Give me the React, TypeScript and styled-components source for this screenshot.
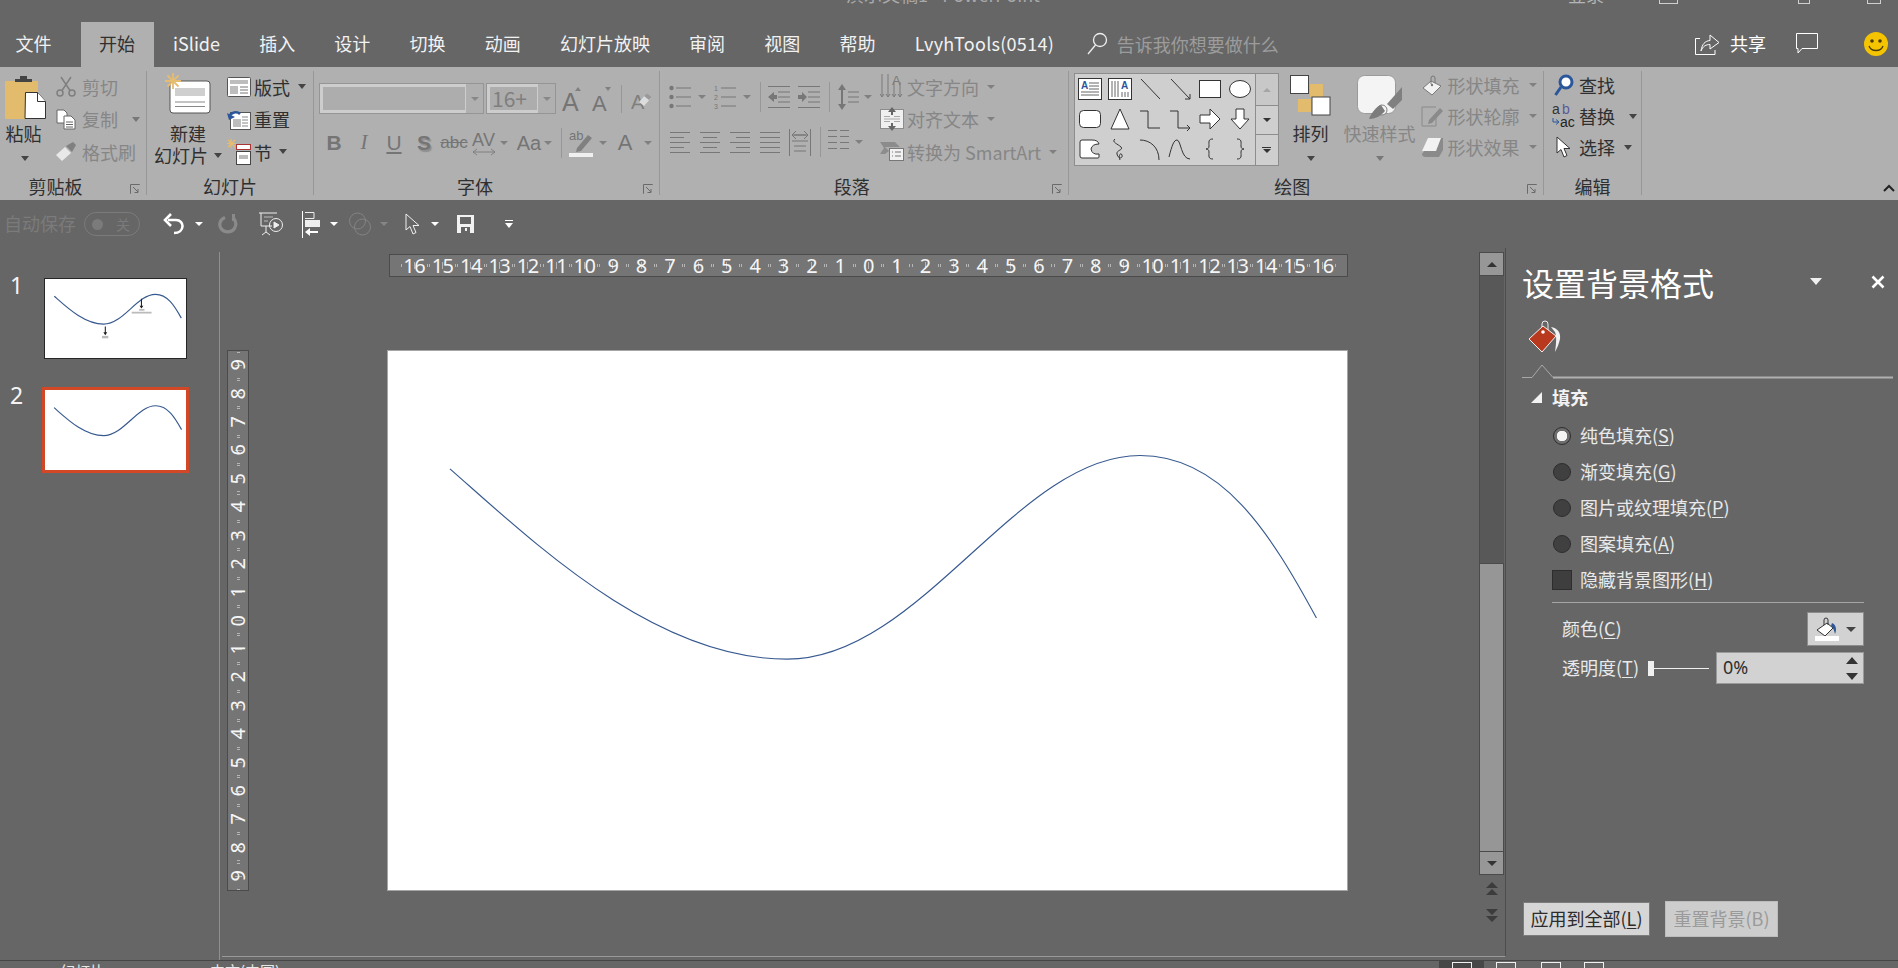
import React from "react";
import styled, { createGlobalStyle } from "styled-components";

const DARK = "#333333";
const OFF = "#868686";

const Global = createGlobalStyle`
  html, body { margin: 0; padding: 0; background: #666666; }
  body { font-family: "Noto Sans CJK SC", "Noto Sans", sans-serif; }
  #root { width: 1898px; height: 968px; overflow: hidden; }
  * { box-sizing: border-box; }
  svg { display: block; flex: none; }
`;

const Root = styled.div`
  width: 1898px; height: 968px; overflow: hidden; display: flex; flex-direction: column; background: #666666;
`;
/* ---- title bar ---- */
const TitleBar = styled.header`
  height: 22px; flex: none; overflow: hidden; display: flex; color: #a9a9a9; font-size: 18px; line-height: 24px;
`;
const TitleText = styled.div`
  margin: -18px 0 0 846px; width: 722px; white-space: pre;
`;
const TitleLogin = styled.div`
  margin-top: -18px; width: 91px; color: #b5b5b5;
`;
const WinBtn = styled.div<{ $w: number; $ml?: number }>`
  width: ${(p) => p.$w}px; height: 4px; margin-left: ${(p) => p.$ml || 0}px; border: 1px solid #d0d0d0; border-top: 0;
`;
/* ---- tabs ---- */
const TabRow = styled.nav`
  height: 45px; flex: none; display: flex; align-items: stretch; color: #f2f2f2; font-size: 18px;
`;
const Tab = styled.div<{ $active?: boolean; $first?: boolean; $latin?: boolean }>`
  display: flex; align-items: center; white-space: nowrap; height: 45px;
  padding: ${(p) => (p.$first ? "0 29px 4px 15.5px" : p.$active ? "0 18.5px 4px" : "0 19.6px 4px")};
  ${(p) => p.$active && "background:#b0b0b0;color:#303030;"}
  ${(p) => p.$latin && "letter-spacing:0.28px;"}
`;
const Search = styled.div`
  display: flex; align-items: center; gap: 9px; margin-left: 13px; color: #9c9c9c; font-size: 18px; padding-bottom: 2px;
`;
const TabRight = styled.div`
  margin-left: auto; display: flex; align-items: center; padding: 0 10px 2px 0; color: #fff;
`;
const Share = styled.span`
  margin: 0 30px 2px 10px; font-size: 18px;
`;
const SmileWrap = styled.div`
  margin-left: 46px; flex: none;
`;
/* ---- ribbon ---- */
const Ribbon = styled.div`
  height: 133px; flex: none; background: #b0b0b0; padding-top: 4px; display: flex; position: relative;
`;
const Group = styled.section<{ $w: number }>`
  width: ${(p) => p.$w}px; height: 124px; flex: none; display: flex; flex-direction: column; border-right: 1px solid #979797;
`;
const Body = styled.div<{ $pl?: number }>`
  flex: 1; display: flex; padding-left: ${(p) => p.$pl || 0}px; min-height: 0; color: ${DARK}; font-size: 18px;
`;
const GroupLabel = styled.div<{ $pr?: number }>`
  position: relative; height: 22px; margin: -4px 0 -2px; line-height: 22px; text-align: center; font-size: 18px; color: #2f2f2f; padding-right: ${(p) => p.$pr || 0}px;
`;
const Launcher = styled.div`
  position: absolute; right: 6px; bottom: 3px;
`;
const BigCol = styled.div<{ $w: number; $ml?: number; $off?: boolean; $pt?: number }>`
  width: ${(p) => p.$w}px; margin-left: ${(p) => p.$ml || 0}px; flex: none; display: flex; flex-direction: column; align-items: center;
  padding-top: ${(p) => p.$pt ?? 2}px; color: ${(p) => (p.$off ? OFF : "#2f2f2f")}; white-space: nowrap;
`;
const BigIcon = styled.div<{ $h: number }>`
  height: ${(p) => p.$h}px; flex: none;
`;
const BigLine = styled.div<{ $mr?: number }>`
  height: 22px; margin-right: ${(p) => p.$mr || 0}px; line-height: 22px; display: flex; align-items: center; gap: 6px;
`;
const BigCaret = styled.div<{ $mr?: number }>`
  height: 24px; margin: 2px ${(p) => p.$mr || 0}px 0 0; display: flex; align-items: center;
`;
const SmallCol = styled.div<{ $ml?: number; $rh: number; $pt?: number }>`
  margin-left: ${(p) => p.$ml || 0}px; padding-top: ${(p) => p.$pt || 0}px; flex: none; display: grid; grid-auto-rows: ${(p) => p.$rh}px;
  align-content: start;
`;
const SmallBtn = styled.div<{ $off?: boolean; $gap?: number }>`
  display: flex; align-items: center; gap: ${(p) => p.$gap ?? 4}px; padding-bottom: 3px; line-height: 24px; color: ${(p) => (p.$off ? OFF : "#2f2f2f")}; white-space: nowrap;
`;
const IconWrap = styled.div<{ $w: number }>`
  width: ${(p) => p.$w}px; flex: none; display: flex; justify-content: center; align-items: center;
`;
const Caret = styled.i<{ $c?: string; $ml?: number; $up?: boolean; $s?: number }>`
  display: block; flex: none; width: 0; height: 0; margin-left: ${(p) => p.$ml || 0}px;
  border-left: ${(p) => p.$s || 4.5}px solid transparent; border-right: ${(p) => p.$s || 4.5}px solid transparent;
  ${(p) => (p.$up ? "border-bottom" : "border-top")}: ${(p) => (p.$s || 4.5) + 0.5}px solid ${(p) => p.$c || "#444"};
`;
const Stack = styled.div<{ $pt?: number }>`
  display: flex; flex-direction: column; padding-top: ${(p) => p.$pt || 0}px; flex: none;
`;
const ToolRow = styled.div<{ $h: number; $mt?: number }>`
  height: ${(p) => p.$h}px; margin-top: ${(p) => p.$mt || 0}px; display: flex; align-items: center; flex: none;
`;
const Slot = styled.div<{ $w: number; $ml?: number; $c?: string; $fs?: number; $font?: string; $b?: boolean; $i?: boolean }>`
  width: ${(p) => p.$w}px; margin-left: ${(p) => p.$ml || 0}px; flex: none; display: flex; align-items: center; justify-content: center;
  color: ${(p) => p.$c || "#757575"}; font-size: ${(p) => p.$fs || 18}px; font-family: ${(p) => p.$font || "inherit"};
  font-weight: ${(p) => (p.$b ? 700 : 400)}; font-style: ${(p) => (p.$i ? "italic" : "normal")}; line-height: 1.2; white-space: nowrap;
`;
const VSep = styled.div<{ $ml: number; $h: number }>`
  width: 1px; height: ${(p) => p.$h}px; margin-left: ${(p) => p.$ml}px; background: #979797; flex: none;
`;
const Combo = styled.div<{ $w: number; $ml?: number }>`
  width: ${(p) => p.$w}px; height: 31px; margin-left: ${(p) => p.$ml || 0}px; flex: none; border: 1px solid #959595; display: flex; align-items: center; background: #b0b0b0;
`;
const ComboField = styled.div`
  flex: 1; height: 100%; border: 3px solid #cdcdcd; border-width: 3px 1px 3px 3px; background: #adadad; color: #7f7f7f; font-size: 21px; line-height: 23px; padding-left: 2px;
`;
const ComboDrop = styled.div`
  width: 17px; display: flex; justify-content: center;
`;
const Under = styled.span`
  text-decoration: underline; text-underline-offset: 2px;
`;
const Struck = styled.span`
  text-decoration: line-through;
`;
const ShadowS = styled.span`
  text-shadow: 1.5px 1.5px 1px #8f8f8f;
`;
/* ---- gallery ---- */
const Gallery = styled.div`
  margin-top: 2px; height: 93px; flex: none; display: flex; border: 1px solid #8d8d8d; background: #cfcfcf;
`;
const GalleryGrid = styled.div`
  width: 180px; display: grid; grid-template-columns: repeat(6, 30px); grid-auto-rows: 30px; align-items: center; justify-items: center;
`;
const GalleryScroll = styled.div`
  width: 23px; display: flex; flex-direction: column; border-left: 1px solid #8d8d8d;
`;
const ScrollCell = styled.div<{ $h: number; $bg: string }>`
  height: ${(p) => p.$h}px; background: ${(p) => p.$bg}; display: flex; flex-direction: column; gap: 1px; align-items: center; justify-content: center; border-bottom: 1px solid #8d8d8d;
  &:last-child { border-bottom: 0; }
`;
const Bar = styled.div`
  width: 9px; height: 1px; background: #333;
`;
const Collapse = styled.div`
  position: absolute; right: 0; bottom: 8px;
`;
/* ---- quick access ---- */
const Qat = styled.div`
  height: 48px; flex: none; display: flex; align-items: center; padding-left: 4px; color: #7b7b7b; font-size: 18px;
`;
const QatLabel = styled.span`
  padding-bottom: 2px;
`;
const Toggle = styled.div`
  width: 56px; height: 24px; margin-left: 8px; border: 1px solid #7b7b7b; border-radius: 12px; display: flex; align-items: center; justify-content: space-between; padding: 0 9px 0 7px; font-size: 14px;
`;
const Dot = styled.i`
  width: 11px; height: 11px; border-radius: 50%; background: #7b7b7b; display: block;
`;
/* ---- workspace ---- */
const Workspace = styled.main`
  flex: 1; min-height: 0; display: flex;
`;
const LeftPanel = styled.aside`
  width: 220px; height: 709px; flex: none; margin-top: 4px; border-right: 1px solid #8f8f8f; padding: 26px 0 0 10px; color: #f4f4f4;
  font-family: "Noto Sans", sans-serif; font-size: 23px;
`;
const ThumbRow = styled.div<{ $mt?: number }>`
  display: flex; margin-top: ${(p) => p.$mt || 0}px;
`;
const ThumbNo = styled.div<{ $w: number; $pt: number }>`
  width: ${(p) => p.$w}px; height: 32px; line-height: 30px; margin-top: ${(p) => p.$pt}px; flex: none;
`;
const Thumb = styled.div<{ $sel?: boolean }>`
  background: #fff; width: ${(p) => (p.$sel ? 147 : 143)}px; height: ${(p) => (p.$sel ? 86 : 81)}px;
  border: ${(p) => (p.$sel ? "3px solid #d24726" : "1px solid #262626")};
`;
const Center = styled.div`
  margin-left: 2px; width: 1284px; height: 709px; flex: none; display: flex; border-bottom: 1px solid #9a9a9a; border-right: 1px solid #4d4d4d;
`;
const Editor = styled.div`
  width: 1257px; flex: none; padding: 6px 0 0 5px;
`;
const HRuler = styled.div`
  margin-left: 162px; width: 959px; height: 23px; background: #757575; border: 1px solid #4b4b4b; display: flex; padding: 0 10px;
`;
const RCell = styled.div<{ $v?: boolean }>`
  flex: none; display: flex; align-items: center; justify-content: center; color: #f6f6f6; font-family: "Noto Sans", sans-serif; font-size: 20px; line-height: 1;
  background-repeat: no-repeat;
  background-image: linear-gradient(#b5b5b5, #b5b5b5), linear-gradient(#b5b5b5, #b5b5b5), linear-gradient(#b5b5b5, #b5b5b5);
  ${(p) =>
    p.$v
      ? `width:20px;height:28.4px;background-size:3px 1px,7px 1px,3px 1px;background-position:center 2%,center 50%,center 98%;`
      : `width:28.4px;height:21px;background-size:1px 3px,1px 7px,1px 3px;background-position:2% center,50% center,98% center;`}
`;
const RNum = styled.span<{ $v?: boolean }>`
  ${(p) => (p.$v ? "transform: rotate(-90deg);" : "")} display: block; letter-spacing: -0.5px;
`;
const SlideRow = styled.div`
  display: flex; margin-top: 73px;
`;
const VRuler = styled.div`
  width: 22px; height: 541px; flex: none; background: #757575; border: 1px solid #4b4b4b; overflow: hidden; display: flex; flex-direction: column;
`;
const Slide = styled.div`
  width: 961px; height: 541px; margin-left: 138px; flex: none; background: #fff; border: 1px solid #a5a5a5;
`;
const VScroll = styled.div`
  width: 25px; flex: none; margin-top: 4px; display: flex; flex-direction: column; align-items: center;
`;
const ScrollBtn = styled.div<{ $h: number }>`
  width: 25px; height: ${(p) => p.$h}px; flex: none; background: #979797; border: 1px solid #4a4a4a; display: flex; align-items: center; justify-content: center;
`;
const Track = styled.div`
  width: 25px; height: 287px; flex: none; background: #585858; border-left: 1px solid #4a4a4a;
`;
const Thumbbar = styled.div`
  width: 25px; height: 288px; flex: none; background: #969696; border: 1px solid #4a4a4a; border-width: 1px 1px 0 1px;
`;
const Nav = styled.div<{ $mt: number }>`
  margin-top: ${(p) => p.$mt}px;
`;
/* ---- pane ---- */
const Pane = styled.aside`
  flex: 1; height: 712px; display: flex; flex-direction: column; padding: 14px 5px 0 16px; color: #e9e9e9; font-size: 18px;
`;
const PaneHead = styled.div`
  display: flex; align-items: center; height: 40px; flex: none; font-size: 32px; color: #fff; line-height: 38px; white-space: nowrap; padding-bottom: 1px;
`;
const PaneCaret = styled.div`
  margin-left: auto;
`;
const PaneClose = styled.div`
  margin: 0 8px 0 49px;
`;
const BucketTab = styled.div`
  margin: 18px 0 0 6px; height: 33px; flex: none;
`;
const TabLine = styled.div`
  margin-top: 11px; height: 15px; flex: none;
`;
const SectionHead = styled.div`
  margin: 6px 0 0 9px; height: 27px; line-height: 24px; padding-bottom: 3px; display: flex; align-items: center; gap: 10px; font-weight: 700; color: #f2f2f2; flex: none;
`;
const Options = styled.div`
  margin: 6px 0 0 31px; display: grid; grid-auto-rows: 36px; flex: none;
`;
const Option = styled.div`
  display: flex; align-items: center; gap: 9px; white-space: nowrap;
`;
const OptionText = styled.span`
  padding-bottom: 3px;
`;
const Radio = styled.i<{ $on?: boolean }>`
  width: 18px; height: 18px; border-radius: 50%; border: 1px solid #2d2d2d; display: block; flex: none;
  background: ${(p) => (p.$on ? "radial-gradient(circle, #f4f4f4 0 5px, #6e6e6e 5.5px)" : "#404040")};
`;
const Check = styled.i`
  width: 20px; height: 20px; margin-left: -1px; margin-right: -1px; display: block; flex: none; background: #3e3e3e; border: 1px solid #2d2d2d;
`;
const PaneRule = styled.div`
  margin: 4px 0 0 30px; width: 312px; height: 1px; background: #a5a5a5; flex: none;
`;
const FieldRow = styled.div<{ $mt: number; $h: number }>`
  margin: ${(p) => p.$mt}px 0 0 40px; width: 302px; height: ${(p) => p.$h}px; display: flex; align-items: center; justify-content: space-between; flex: none; white-space: nowrap;
`;
const ColorBtn = styled.div`
  width: 57px; height: 34px; background: #d2d2d2; border: 1px solid #8c8c8c; display: flex; align-items: center; justify-content: center; gap: 7px;
`;
const FieldLabel = styled.div<{ $w?: number }>`
  ${(p) => (p.$w ? `width:${p.$w}px;flex:none;` : "")} padding-bottom: 3px;
`;
const Slider = styled.div`
  width: 61px; flex: none; height: 20px; display: flex; align-items: center; margin-right: 7px;
`;
const SliderKnob = styled.i`
  width: 6px; height: 15px; background: #f0f0f0; display: block; flex: none;
`;
const SliderLine = styled.i`
  flex: 1; height: 1px; background: #f0f0f0; display: block;
`;
const Spin = styled.div`
  flex: 1; height: 32px; background: #d2d2d2; border: 1px solid #9a9a9a; display: flex; align-items: center; justify-content: space-between; padding: 0 5px 0 6px; color: #2f2f2f; font-family: "Noto Sans", sans-serif; font-size: 18px;
`;
const SpinValue = styled.span`
  padding-bottom: 2px;
`;
const SpinArrows = styled.div`
  display: flex; flex-direction: column; gap: 9px;
`;
const PaneFooter = styled.div`
  margin-top: auto; padding: 0 0 23px 1px; display: flex; align-items: center; gap: 15px;
`;
const PaneBtn = styled.div<{ $off?: boolean }>`
  height: ${(p) => (p.$off ? 36 : 34)}px; width: ${(p) => (p.$off ? 113 : 127)}px; background: ${(p) => (p.$off ? "#cdcdcd" : "#d6d6d6")};
  border: 1px solid ${(p) => (p.$off ? "#bdbdbd" : "#7c7c7c")}; color: ${(p) => (p.$off ? "#9a9a9a" : "#2c2c2c")};
  display: flex; align-items: center; justify-content: center; white-space: nowrap; font-size: 18px; line-height: 28px; padding-bottom: 2px;
`;
/* ---- status ---- */
const Status = styled.footer`
  height: 8px; flex: none; border-top: 1px solid #464646; overflow: hidden; display: flex; color: #e8e8e8; font-size: 15px; line-height: 20px;
`;
const StatusText = styled.div<{ $w: number; $ml: number }>`
  margin: 0 0 0 ${(p) => p.$ml}px; width: ${(p) => p.$w}px; white-space: nowrap; flex: none;
`;
const StatusActive = styled.div`
  width: 45px; height: 8px; background: #474747; display: flex; justify-content: center; flex: none; margin-left: 1px;
`;
const StatusIcon = styled.i<{ $ml?: number }>`
  width: 20px; height: 6px; margin: 1px 0 0 ${(p) => p.$ml || 0}px; border: 1px solid #f0f0f0; border-bottom: 0; display: block; flex: none;
`;

/* ==== icons ==== */
const CurvePath = () => (
  <path d="M371 386.500C440 447 540 544 650 544C760 544 840 375.500 942 375.500C1010 375.500 1050 440 1088 510" fill="none" stroke="#37598f" strokeWidth="1.150" vectorEffect="non-scaling-stroke" />
);
const Launch = () => (
  <svg width="10" height="10" viewBox="0 0 10 10" fill="none" stroke="#6a6a6a">
    <path d="M9.5 1V.5H.5V9.5H1" />
    <path d="M3 3L8 8M8 5V8.5H4.5" />
  </svg>
);
const PasteIcon = () => (
  <svg width="42" height="44" viewBox="0 0 42 44">
    <rect x="0" y="6" width="33" height="38" rx="1" fill="#e2bb6c" />
    <path d="M10 7V4h5V1h7v3h5v3z" fill="#444" />
    <path d="M20.5 17.5h12l8 9v17h-20.5z" fill="#fff" stroke="#333" />
    <path d="M32.5 17.5v9h8" fill="#fff" stroke="#333" />
  </svg>
);
const Scissors = () => (
  <svg width="20" height="21" viewBox="0 0 20 21" fill="none" stroke="#7f7f7f" strokeWidth="1.5">
    <circle cx="4" cy="17" r="3" />
    <circle cx="16" cy="17" r="3" />
    <path d="M6 14.5L15 1M14 14.5L5 1" />
  </svg>
);
const CopyIcon = () => (
  <svg width="20" height="21" viewBox="0 0 20 21" fill="#fff" stroke="#666">
    <path d="M1 1h7l3 3v10H1z" />
    <path d="M8 7h7l4 4v9H8z" />
    <path d="M10 13h7M10 15.500h7M10 18h7" />
  </svg>
);
const BrushIcon = () => (
  <svg width="22" height="21" viewBox="0 0 22 21">
    <path d="M1 14L10 6l6 6-9 8z" fill="#e8e8e8" />
    <path d="M11 5l7-4 3 3-4 7z" fill="#808080" />
  </svg>
);
const NewSlideIcon = () => (
  <svg width="46" height="41" viewBox="0 0 46 41">
    <rect x="5" y="8" width="40" height="32" rx="3" fill="#fff" stroke="#555" />
    <rect x="10" y="15" width="30" height="8" fill="#cfcfcf" />
    <path d="M10 29h30M10 33.500h30" stroke="#888" />
    <path d="M8 0v16M0 8h16M2.500 2.500l11 11M13.500 2.500l-11 11" stroke="#e6bc70" strokeWidth="1.8" />
  </svg>
);
const LayoutIcon = () => (
  <svg width="24" height="20" viewBox="0 0 24 20">
    <rect x=".5" y=".5" width="23" height="19" rx="1" fill="#fff" stroke="#555" />
    <rect x="3" y="3" width="18" height="4" fill="#bdbdbd" />
    <rect x="3" y="9" width="8" height="8" fill="#bdbdbd" />
    <path d="M13 10h8M13 13h8M13 16h8" stroke="#777" />
  </svg>
);
const ResetIcon = () => (
  <svg width="24" height="21" viewBox="0 0 24 21">
    <rect x="3.500" y="3.500" width="20" height="17" fill="#fff" stroke="#555" />
    <rect x="6" y="10" width="8" height="8" fill="#bdbdbd" />
    <path d="M15 8h6M15 11h6M15 14h6M15 17h6" stroke="#888" />
    <path d="M2 8C4 3 10 2 13 5" fill="none" stroke="#2b579a" strokeWidth="2.500" />
    <path d="M0 4l2 7 6-3z" fill="#2b579a" />
  </svg>
);
const SectionIcon = () => (
  <svg width="24" height="26" viewBox="0 0 24 26">
    <path d="M4 0v9M0 4.500h9M1 1l7 7M8 1l-7 7" stroke="#e6bc70" strokeWidth="1.200" />
    <rect x="9.500" y="5.500" width="14" height="5" fill="#fff" stroke="#a33" />
    <rect x="9.500" y="12.500" width="14" height="13" fill="#fff" stroke="#444" />
    <rect x="12" y="16" width="9" height="4" fill="#bbb" />
  </svg>
);
const AGrow = ({ up }: { up: boolean }) => (
  <svg width="20" height="26" viewBox="0 0 20 26">
    <text x="0" y="25" fontFamily="Liberation Sans" fontSize={up ? 25 : 22} fill="#757575">A</text>
    <path d={up ? "M13 5l3-4 3 4z" : "M13 1l3 4 3-4z"} fill="#808080" />
  </svg>
);
const ClearIcon = () => (
  <svg width="22" height="30" viewBox="0 0 22 30">
    <text x="0" y="25" fontFamily="Liberation Sans" fontSize="20" fill="#7f7f7f">A</text>
    <path d="M8 18l8-9 5 4-8 9z" fill="#dcdcdc" />
    <path d="M13 12l3-3 5 4-3 3z" fill="#9a9a9a" />
  </svg>
);
const AVIcon = () => (
  <svg width="24" height="26" viewBox="0 0 24 26">
    <text x="0" y="16" fontFamily="Liberation Sans" fontSize="18" fill="#757575" textLength="23">AV</text>
    <path d="M1 22h22M5 19l-4 3 4 3M19 19l4 3-4 3" stroke="#808080" fill="none" />
  </svg>
);
const HighlightIcon = () => (
  <svg width="25" height="30" viewBox="0 0 25 30">
    <text x="0" y="12" fontFamily="Liberation Sans" fontSize="13" fill="#757575">ab</text>
    <path d="M8 20L19 7l4 3L12 23l-5 1z" fill="#808080" />
    <rect x="0" y="25" width="24" height="4" fill="#f0f0f0" />
  </svg>
);
const lines = (arr: [number, number, number][]) => arr.map(([a, b, y]) => `M${a} ${y}H${b}`).join("");
const BulletIcon = () => (
  <svg width="22" height="26" viewBox="0 0 22 26">
    <circle cx="2.500" cy="4" r="2.200" fill="#777" /><circle cx="2.500" cy="13" r="2.200" fill="#777" /><circle cx="2.500" cy="22" r="2.200" fill="#777" />
    <path d={lines([[7, 22, 4], [7, 22, 13], [7, 22, 22]])} stroke="#777" />
  </svg>
);
const NumberIcon = () => (
  <svg width="22" height="26" viewBox="0 0 22 26">
    <text x="0" y="7" fontSize="7" fill="#777" fontFamily="Liberation Sans">1</text>
    <text x="0" y="16" fontSize="7" fill="#777" fontFamily="Liberation Sans">2</text>
    <text x="0" y="25" fontSize="7" fill="#777" fontFamily="Liberation Sans">3</text>
    <path d={lines([[7, 22, 4], [7, 22, 13], [7, 22, 22]])} stroke="#777" />
  </svg>
);
const IndentIcon = ({ out }: { out: boolean }) => (
  <svg width="22" height="24" viewBox="0 0 22 24">
    <path d="M0 1.500H22M0 22.500H22M10 7H22M10 12H22M10 17H22" stroke="#777" />
    <path d={out ? "M0 12l6-5v3h3v4H6v3z" : "M9 12l-5-5v3H0v4h4v3z"} fill="#777" />
  </svg>
);
const SpacingIcon = () => (
  <svg width="22" height="26" viewBox="0 0 22 26">
    <path d="M5 0l4 6H6v14h3l-4 6-4-6h3V6H1z" fill="#777" />
    <path d="M11 8H22M11 13H22M11 18H22" stroke="#777" />
  </svg>
);
const AlignIcon = ({ k }: { k: "l" | "c" | "r" | "j" }) => {
  const d: Record<string, [number, number][]> = {
    l: [[0, 20], [0, 14], [0, 20], [0, 14], [0, 20]],
    c: [[0, 20], [3, 17], [0, 20], [3, 17], [0, 20]],
    r: [[0, 20], [6, 20], [0, 20], [6, 20], [0, 20]],
    j: [[0, 20], [0, 20], [0, 20], [0, 20], [0, 20]],
  };
  return (
    <svg width="20" height="25" viewBox="0 0 20 25">
      <path d={d[k].map(([a, b], i) => `M${a} ${2.5 + i * 5}H${b}`).join("")} stroke="#777" strokeWidth="1" />
    </svg>
  );
};
const DistIcon = () => (
  <svg width="22" height="27" viewBox="0 0 22 27">
    <path d="M.5 0V27M21.500 0V27M3 12h16M5 6h12M5 17h12M5 22h12" stroke="#777" />
    <path d="M3 6l4-4M3 6l4 4M19 6l-4-4M19 6l-4 4M3 6h16" stroke="#777" fill="none" />
  </svg>
);
const ColsIcon = () => (
  <svg width="21" height="26" viewBox="0 0 21 26">
    <path d="M0 1.500H9M0 7.500H9M0 13.500H9M0 19.500H9M12 1.500H21M12 7.500H21M12 13.500H21M12 19.500H21" stroke="#777" />
  </svg>
);
const TextDirIcon = () => (
  <svg width="24" height="25" viewBox="0 0 24 25">
    <path d="M2 0V22M8 0V22M14 8V22M20 8V22" stroke="#7a7a7a" />
    <path d="M0 20l2 3 2-3M6 20l2 3 2-3M12 20l2 3 2-3M18 20l2 3 2-3" stroke="#7a7a7a" fill="none" />
    <text x="12" y="11" fontFamily="Liberation Sans" fontSize="13" fill="#7a7a7a">A</text>
  </svg>
);
const VAlignIcon = () => (
  <svg width="24" height="24" viewBox="0 0 24 24">
    <rect x="0.500" y="2.500" width="23" height="19" fill="#f0f0f0" stroke="#8c8c8c" />
    <path d="M4 12H20M4 9.500H10M14 9.500H20M4 14.500H10M14 14.500H20" stroke="#aaa" />
    <path d="M12 0l4 5h-3v3h-2V5H8zM12 24l4-5h-3v-3h-2v3H8z" fill="#666" />
  </svg>
);
const SmartArtIcon = () => (
  <svg width="24" height="19" viewBox="0 0 24 19">
    <path d="M0 0h15l5 5H5l4 4-4 3H0l4-6z" fill="#8c8c8c" />
    <rect x="9.500" y="6.500" width="14" height="12" fill="#f2f2f2" stroke="#777" />
    <path d="M12 10h1M15 10h6M12 14h1M15 14h6" stroke="#777" />
  </svg>
);
const S = { stroke: "#333", fill: "none", strokeWidth: 1 };
const F = { stroke: "#333", fill: "#fff", strokeWidth: 1 };
const Shp = ({ children }: { children: React.ReactNode }) => (
  <svg width="24" height="24" viewBox="0 0 24 24">{children}</svg>
);
const shapes: React.ReactNode[] = [
  <Shp key="a"><rect x=".5" y="1.500" width="23" height="21" {...F} /><text x="3" y="12" fontSize="10" fontWeight="700" fill="#2b579a" fontFamily="Liberation Sans">A</text><path d="M11 6h10M11 9h10M11 12h10M3 15h18M3 18h18" stroke="#666" /></Shp>,
  <Shp key="b"><rect x=".5" y="1.500" width="23" height="21" {...F} /><text x="13" y="12" fontSize="10" fontWeight="700" fill="#2b579a" fontFamily="Liberation Sans">A</text><path d="M4 4v16M7 4v16M10 4v16M14 15v5M17 15v5M20 15v5" stroke="#666" /></Shp>,
  <Shp key="c"><path d="M3 2L22 22" {...S} /></Shp>,
  <Shp key="d"><path d="M3 2L22 22M22 17v5h-5" {...S} /></Shp>,
  <Shp key="e"><rect x="1.500" y="3.500" width="21" height="17" {...F} /></Shp>,
  <Shp key="f"><ellipse cx="12" cy="12" rx="10.500" ry="8.500" {...F} /></Shp>,
  <Shp key="g"><rect x="1.500" y="3.500" width="21" height="17" rx="4" {...F} /></Shp>,
  <Shp key="h"><path d="M12 2L21 22H3z" {...F} /></Shp>,
  <Shp key="i"><path d="M2 4H10V21H22" {...S} /></Shp>,
  <Shp key="j"><path d="M2 4H10V21H22M19 18l3 3-3 3" {...S} /></Shp>,
  <Shp key="k"><path d="M2 8H12V2L22 12L12 22V16H2z" {...F} /></Shp>,
  <Shp key="l"><path d="M8 2H16V12H21L12 22L3 12H8z" {...F} /></Shp>,
  <Shp key="m"><path d="M2 5Q2 3 4 3H14Q20 3 21 7Q14 7 13 12Q14 18 21 17V20Q21 21 20 21H4Q2 21 2 19z" {...F} /></Shp>,
  <Shp key="n"><path d="M7 2C3 5 10 7 13 10C16 13 8 13 9 17C10 22 15 22 14 18C13 15 10 18 12 23" {...S} /></Shp>,
  <Shp key="o"><path d="M2 3C12 3 21 10 21 23" {...S} /></Shp>,
  <Shp key="p"><path d="M1 20C4 8 6 3 9 3C13 3 13 22 22 22" {...S} /></Shp>,
  <Shp key="q"><path d="M15 2C10 2 11 5 11 9C11 11 10 12 8 12C10 12 11 13 11 15C11 19 10 22 15 22" {...S} /></Shp>,
  <Shp key="r"><path d="M9 2C14 2 13 5 13 9C13 11 14 12 16 12C14 12 13 13 13 15C13 19 14 22 9 22" {...S} /></Shp>,
];
const ArrangeIcon = () => (
  <svg width="41" height="42" viewBox="0 0 41 42">
    <rect x="20" y="9" width="13" height="13" fill="#e2bb6c" />
    <rect x="8" y="24" width="13" height="13" fill="#e2bb6c" />
    <rect x=".5" y=".5" width="18" height="18" fill="#fff" stroke="#444" />
    <rect x="22" y="22" width="18" height="18" fill="#fff" stroke="#444" />
  </svg>
);
const QuickStyleIcon = () => (
  <svg width="46" height="45" viewBox="0 0 46 45">
    <rect x=".5" y=".5" width="38" height="38" rx="7" fill="#f4f4f4" stroke="#9a9a9a" />
    <path d="M45 12L45 25L36 34L30 29z" fill="#808080" />
    <circle cx="25" cy="35" r="5" fill="#f4f4f4" stroke="#808080" />
    <path d="M12 44C14 38 20 31 24 30L28 36C24 41 18 44 12 44z" fill="#7c7c7c" />
  </svg>
);
const ShapeFill = () => (
  <svg width="23" height="21" viewBox="0 0 23 21">
    <path d="M10 6L2 13L11 20L20 11z" fill="#f2f2f2" stroke="#777" />
    <path d="M10 9V3a2 2 0 014 0v5" fill="none" stroke="#777" />
    <circle cx="11" cy="10" r="1.200" fill="#777" />
  </svg>
);
const ShapeLine = () => (
  <svg width="23" height="21" viewBox="0 0 23 21">
    <path d="M15 1H1V20H15V10" fill="none" stroke="#8a8a8a" />
    <path d="M8 14L19 2L22 5L11 17L7 18z" fill="#8a8a8a" />
  </svg>
);
const ShapeFx = () => (
  <svg width="23" height="22" viewBox="0 0 23 22">
    <path d="M4 14L10 2H22V14L18 21H5Q1 21 1 18z" fill="#8a8a8a" />
    <path d="M1 15L7 2H20L15 15z" fill="#f2f2f2" />
  </svg>
);
const FindIcon = () => (
  <svg width="20" height="23" viewBox="0 0 20 23">
    <circle cx="12" cy="8" r="6" fill="#fff" stroke="#2b579a" strokeWidth="3" />
    <path d="M7 13L1.500 21" stroke="#2b579a" strokeWidth="3" />
  </svg>
);
const ReplaceIcon = () => (
  <svg width="23" height="24" viewBox="0 0 23 24">
    <text x="0" y="10" fontSize="14" fontFamily="Liberation Sans" fill="#333">a</text>
    <text x="10" y="10" fontSize="14" fontFamily="Liberation Sans" fill="#5a5a99">b</text>
    <text x="8" y="23" fontSize="14" fontFamily="Liberation Sans" fill="#222">ac</text>
    <path d="M1 14v4h5M4 15.500L7 18l-3 2.500" stroke="#2b579a" fill="none" />
  </svg>
);
const CursorIcon = ({ c = "#fff", s = "#333", w = 15, h = 22 }: { c?: string; s?: string; w?: number; h?: number }) => (
  <svg width={w} height={h} viewBox="0 0 15 22">
    <path d="M1 1V17L5 13.500L8 21L11 19.500L8 12.500H14z" fill={c} stroke={s} />
  </svg>
);
const Undo = () => (
  <svg width="21" height="22" viewBox="0 0 21 22" fill="none" stroke="#fff" strokeWidth="2.600">
    <path d="M5 7H13C22 7 22 20 11 20" />
    <path d="M8 1L2 7L8 13" />
  </svg>
);
const Redo = () => (
  <svg width="20" height="20" viewBox="0 0 20 20" fill="none" stroke="#8a8a8a" strokeWidth="3.200">
    <path d="M7 3.500C2 5.500 0.500 10.500 3 14.500C6 19 13.500 19 16.500 14.500C18.500 11 18 7 15.500 4" />
    <path d="M15.500 0V7" strokeWidth="3" />
  </svg>
);
const PresentIcon = () => (
  <svg width="24" height="24" viewBox="0 0 24 24" fill="none" stroke="#eee">
    <path d="M0 1H18M2 1V14H13M7 14V20M3 23L7 20L11 23" />
    <path d="M5 5H14M5 9H9" stroke="#bbb" />
    <circle cx="17" cy="13" r="6.500" />
    <path d="M15 10L20 13L15 16z" fill="#eee" />
  </svg>
);
const AlignQat = () => (
  <svg width="18" height="27" viewBox="0 0 18 27">
    <path d="M.5 0V27" stroke="#fff" />
    <path d="M3 1.500H12V7.500H3" fill="none" stroke="#eee" />
    <rect x="3" y="9" width="15" height="7" fill="#eee" />
    <path d="M3 21L8 17V20H16V22H8V25z" fill="#fff" />
  </svg>
);
const Circles = () => (
  <svg width="22" height="24" viewBox="0 0 22 24" fill="none" stroke="#838383">
    <circle cx="8.500" cy="9" r="8" /><circle cx="13.500" cy="15" r="8" />
  </svg>
);
const SaveIcon = () => (
  <svg width="19" height="20" viewBox="0 0 19 20">
    <path d="M1 1H18V19H1z" fill="#f2f2f2" />
    <rect x="4" y="3" width="11" height="7" fill="#666" />
    <rect x="5" y="13" width="9" height="6" fill="#666" />
    <rect x="9" y="14" width="2" height="3" fill="#f2f2f2" />
  </svg>
);
const More = () => (
  <svg width="10" height="10" viewBox="0 0 10 10">
    <path d="M1 1.500H9" stroke="#fff" />
    <path d="M1 4H9L5 9z" fill="#fff" />
  </svg>
);
const SearchIcon = () => (
  <svg width="21" height="23" viewBox="0 0 21 23" fill="none" stroke="#efefef" strokeWidth="1.300">
    <circle cx="13" cy="8" r="6.500" />
    <path d="M8.500 13L1 22" />
  </svg>
);
const ShareIcon = () => (
  <svg width="25" height="22" viewBox="0 0 25 22" fill="none" stroke="#fff">
    <path d="M5 5.500H.5V21.500H20V17" />
    <path d="M6 18C7 11 10 8 15 7.500V2L24 9.500L15 16V11.500C11 11.500 8 13 6 18z" fill="#666" />
  </svg>
);
const Comment = () => (
  <svg width="22" height="21" viewBox="0 0 22 21" fill="none" stroke="#fff">
    <path d="M.5.500H21.500V15.500H6L2 20V15.500H.5z" />
  </svg>
);
const Smile = () => (
  <svg width="24" height="24" viewBox="0 0 24 24">
    <ellipse cx="12" cy="12" rx="12" ry="12" fill="#f5c400" />
    <circle cx="8" cy="9" r="1.800" fill="#4b3b00" /><circle cx="16" cy="9" r="1.800" fill="#4b3b00" />
    <path d="M5 14C7 20 17 20 19 14" fill="none" stroke="#4b3b00" strokeWidth="1.300" />
  </svg>
);
const Chevron = () => (
  <svg width="12" height="8" viewBox="0 0 12 8" fill="none" stroke="#222" strokeWidth="2">
    <path d="M1 7L6 2L11 7" />
  </svg>
);
const Close = () => (
  <svg width="14" height="14" viewBox="0 0 14 14" stroke="#fff" strokeWidth="2.600">
    <path d="M1.500 1.500L12.500 12.500M12.500 1.500L1.500 12.500" />
  </svg>
);
const Bucket = () => (
  <svg width="33" height="33" viewBox="0 0 33 33">
    <path d="M14 8V4a3 3 0 016 0v6" fill="none" stroke="#eee" />
    <path d="M15 6L1 19L14 32L28 16z" fill="#b8391d" stroke="#f2f2f2" />
    <circle cx="15" cy="12" r="1.800" fill="#fff" />
    <path d="M23 7C29 8 33 12 32 19C31 24 29 28 27 32C28 25 29 17 27 12z" fill="#f2f2f2" />
  </svg>
);
const Notch = () => (
  <svg width="371" height="15" viewBox="0 0 371 15" fill="none">
    <path d="M0 13.500H10L20 1L31 13.500" stroke="#a8a8a8" strokeWidth="1" />
    <path d="M31 13.500H371" stroke="#b0b0b0" strokeWidth="2" />
  </svg>
);
const TriOpen = () => (
  <svg width="11" height="11" viewBox="0 0 11 11"><path d="M11 0V11H0z" fill="#f2f2f2" /></svg>
);
const ColorBucket = () => (
  <svg width="24" height="24" viewBox="0 0 24 24">
    <path d="M12 6L2 13L10 19L18 11z" fill="#fff" stroke="#333" />
    <path d="M9 8V3a2 2 0 014 0v5" fill="none" stroke="#333" />
    <path d="M17 6C21 8 22 12 20 17C19 13 18 10 16 9z" fill="#2b579a" />
    <rect x="0" y="19" width="24" height="5" fill="#fff" />
  </svg>
);
const DoubleArrow = ({ up }: { up: boolean }) => (
  <svg width="12" height="14" viewBox="0 0 12 14">
    <path d={up ? "M6 0L12 6H0zM6 7L12 13H0z" : "M0 0H12L6 6zM0 7H12L6 13z"} fill="#3c3c3c" />
  </svg>
);
const Rule = ({ v }: { v?: boolean }) => {
  const nums = v
    ? [9, 8, 7, 6, 5, 4, 3, 2, 1, 0, 1, 2, 3, 4, 5, 6, 7, 8, 9]
    : [16, 15, 14, 13, 12, 11, 10, 9, 8, 7, 6, 5, 4, 3, 2, 1, 0, 1, 2, 3, 4, 5, 6, 7, 8, 9, 10, 11, 12, 13, 14, 15, 16];
  return (
    <>
      {nums.map((n, i) => (
        <RCell key={i} $v={v}><RNum $v={v}>{n}</RNum></RCell>
      ))}
    </>
  );
};

export default function App() {
  return (
    <Root>
      <Global />
      <TitleBar>
        <TitleText>演示文稿1 - PowerPoint</TitleText>
        <TitleLogin>登录</TitleLogin>
        <WinBtn $w={19} />
        <WinBtn $w={12} $ml={120} />
        <WinBtn $w={14} $ml={57} />
      </TitleBar>

      <TabRow>
        <Tab $first>文件</Tab>
        <Tab $active>开始</Tab>
        {["iSlide", "插入", "设计", "切换", "动画", "幻灯片放映", "审阅", "视图", "帮助"].map((t) => (
          <Tab key={t}>{t}</Tab>
        ))}
        <Tab $latin>LvyhTools(0514)</Tab>
        <Search><SearchIcon />告诉我你想要做什么</Search>
        <TabRight>
          <ShareIcon />
          <Share>共享</Share>
          <Comment />
          <SmileWrap><Smile /></SmileWrap>
        </TabRight>
      </TabRow>

      <Ribbon>
        <Group $w={147}>
          <Body $pl={5}>
            <BigCol $w={42} $pt={4}>
              <BigIcon $h={47}><PasteIcon /></BigIcon>
              <BigLine $mr={5}>粘贴</BigLine>
              <BigCaret $mr={2}><Caret /></BigCaret>
            </BigCol>
            <SmallCol $ml={9} $rh={32.5} $pt={1}>
              <SmallBtn $off $gap={6}><IconWrap $w={20}><Scissors /></IconWrap>剪切</SmallBtn>
              <SmallBtn $off $gap={6}><IconWrap $w={20}><CopyIcon /></IconWrap>复制<Caret $c="#777" $ml={8} /></SmallBtn>
              <SmallBtn $off $gap={6}><IconWrap $w={20}><BrushIcon /></IconWrap>格式刷</SmallBtn>
            </SmallCol>
          </Body>
          <GroupLabel $pr={35}>剪贴板<Launcher><Launch /></Launcher></GroupLabel>
        </Group>

        <Group $w={167}>
          <Body $pl={6}>
            <BigCol $w={70} $pt={2}>
              <BigIcon $h={49}><NewSlideIcon /></BigIcon>
              <BigLine>新建</BigLine>
              <BigLine>幻灯片<Caret /></BigLine>
            </BigCol>
            <SmallCol $ml={4} $rh={32.5} $pt={1}>
              <SmallBtn><IconWrap $w={23}><LayoutIcon /></IconWrap>版式<Caret $ml={4} /></SmallBtn>
              <SmallBtn><IconWrap $w={23}><ResetIcon /></IconWrap>重置</SmallBtn>
              <SmallBtn><IconWrap $w={23}><SectionIcon /></IconWrap>节<Caret $ml={3} /></SmallBtn>
            </SmallCol>
          </Body>
          <GroupLabel>幻灯片</GroupLabel>
        </Group>

        <Group $w={346}>
          <Body $pl={5}>
            <Stack $pt={12}>
              <ToolRow $h={31}>
                <Combo $w={165}><ComboField /><ComboDrop><Caret $c="#888" $s={4} /></ComboDrop></Combo>
                <Combo $w={70} $ml={2}><ComboField>16+</ComboField><ComboDrop><Caret $c="#888" $s={4} /></ComboDrop></Combo>
                <Slot $w={20} $ml={6}><AGrow up /></Slot>
                <Slot $w={20} $ml={10}><AGrow up={false} /></Slot>
                <VSep $ml={9} $h={28} />
                <Slot $w={22} $ml={9}><ClearIcon /></Slot>
              </ToolRow>
              <ToolRow $h={32} $mt={13}>
                <Slot $w={30} $b $fs={21} $font='"Liberation Sans"'>B</Slot>
                <Slot $w={30} $i $fs={21} $font='"Liberation Serif"'>I</Slot>
                <Slot $w={30} $fs={21} $font='"Liberation Sans"'><Under>U</Under></Slot>
                <Slot $w={30} $b $fs={21} $font='"Liberation Sans"'><ShadowS>S</ShadowS></Slot>
                <Slot $w={30} $fs={17} $font='"Liberation Sans"'><Struck>abc</Struck></Slot>
                <Slot $w={30}><AVIcon /></Slot>
                <Slot $w={10}><Caret $c="#808080" $s={4} /></Slot>
                <Slot $w={28} $ml={6} $fs={20} $font='"Liberation Sans"'>Aa</Slot>
                <Slot $w={10}><Caret $c="#808080" $s={4} /></Slot>
                <VSep $ml={8} $h={30} />
                <Slot $w={25} $ml={7}><HighlightIcon /></Slot>
                <Slot $w={10} $ml={4}><Caret $c="#808080" $s={4} /></Slot>
                <Slot $w={18} $ml={8} $fs={22} $font='"Liberation Sans"'>A</Slot>
                <Slot $w={10} $ml={9}><Caret $c="#808080" $s={4} /></Slot>
              </ToolRow>
            </Stack>
          </Body>
          <GroupLabel $pr={23}>字体<Launcher><Launch /></Launcher></GroupLabel>
        </Group>

        <Group $w={408.6}>
          <Body $pl={9}>
            <Stack $pt={11}>
              <ToolRow $h={30}>
                <Slot $w={22}><BulletIcon /></Slot>
                <Slot $w={10} $ml={6}><Caret $c="#808080" $s={4} /></Slot>
                <Slot $w={22} $ml={7}><NumberIcon /></Slot>
                <Slot $w={10} $ml={6}><Caret $c="#808080" $s={4} /></Slot>
                <VSep $ml={8} $h={30} />
                <Slot $w={22} $ml={7}><IndentIcon out /></Slot>
                <Slot $w={22} $ml={8}><IndentIcon out={false} /></Slot>
                <VSep $ml={9} $h={30} />
                <Slot $w={22} $ml={7}><SpacingIcon /></Slot>
                <Slot $w={10} $ml={4}><Caret $c="#808080" $s={4} /></Slot>
              </ToolRow>
              <ToolRow $h={30} $mt={15}>
                <Slot $w={20} $ml={1}><AlignIcon k="l" /></Slot>
                <Slot $w={20} $ml={10}><AlignIcon k="c" /></Slot>
                <Slot $w={20} $ml={10}><AlignIcon k="r" /></Slot>
                <Slot $w={20} $ml={10}><AlignIcon k="j" /></Slot>
                <Slot $w={22} $ml={9}><DistIcon /></Slot>
                <VSep $ml={9} $h={30} />
                <Slot $w={21} $ml={7}><ColsIcon /></Slot>
                <Slot $w={10} $ml={5}><Caret $c="#808080" $s={4} /></Slot>
              </ToolRow>
            </Stack>
            <SmallCol $ml={7} $rh={32.5} $pt={1}>
              <SmallBtn $off $gap={3}><IconWrap $w={24}><TextDirIcon /></IconWrap>文字方向<Caret $c="#808080" $s={4} $ml={5} /></SmallBtn>
              <SmallBtn $off $gap={3}><IconWrap $w={24}><VAlignIcon /></IconWrap>对齐文本<Caret $c="#808080" $s={4} $ml={5} /></SmallBtn>
              <SmallBtn $off $gap={3}><IconWrap $w={24}><SmartArtIcon /></IconWrap>转换为 SmartArt<Caret $c="#808080" $s={4} $ml={5} /></SmallBtn>
            </SmallCol>
          </Body>
          <GroupLabel $pr={24}>段落<Launcher><Launch /></Launcher></GroupLabel>
        </Group>

        <Group $w={475.4}>
          <Body $pl={5}>
            <Gallery>
              <GalleryGrid>{shapes}</GalleryGrid>
              <GalleryScroll>
                <ScrollCell $h={32} $bg="#c8c8c8"><Caret $up $c="#a5a5a5" $s={4} /></ScrollCell>
                <ScrollCell $h={29} $bg="#cfcfcf"><Caret $c="#333" $s={4} /></ScrollCell>
                <ScrollCell $h={30} $bg="#cfcfcf"><Bar /><Caret $c="#333" $s={4} /></ScrollCell>
              </GalleryScroll>
            </Gallery>
            <BigCol $w={50} $ml={7} $pt={4}>
              <BigIcon $h={47}><ArrangeIcon /></BigIcon>
              <BigLine>排列</BigLine>
              <BigCaret><Caret /></BigCaret>
            </BigCol>
            <BigCol $w={76} $ml={6} $off $pt={4}>
              <BigIcon $h={47}><QuickStyleIcon /></BigIcon>
              <BigLine>快速样式</BigLine>
              <BigCaret><Caret $c="#777" /></BigCaret>
            </BigCol>
            <SmallCol $ml={4} $rh={31}>
              <SmallBtn $off><IconWrap $w={22}><ShapeFill /></IconWrap>形状填充<Caret $c="#808080" $s={4} $ml={5} /></SmallBtn>
              <SmallBtn $off><IconWrap $w={22}><ShapeLine /></IconWrap>形状轮廓<Caret $c="#808080" $s={4} $ml={5} /></SmallBtn>
              <SmallBtn $off><IconWrap $w={22}><ShapeFx /></IconWrap>形状效果<Caret $c="#808080" $s={4} $ml={5} /></SmallBtn>
            </SmallCol>
          </Body>
          <GroupLabel $pr={27}>绘图<Launcher><Launch /></Launcher></GroupLabel>
        </Group>

        <Group $w={98}>
          <Body $pl={10}>
            <SmallCol $rh={31}>
              <SmallBtn $gap={5}><IconWrap $w={20}><FindIcon /></IconWrap>查找</SmallBtn>
              <SmallBtn $gap={5}><IconWrap $w={20}><ReplaceIcon /></IconWrap>替换<Caret $ml={9} /></SmallBtn>
              <SmallBtn $gap={5}><IconWrap $w={20}><CursorIcon /></IconWrap>选择<Caret $ml={4} /></SmallBtn>
            </SmallCol>
          </Body>
          <GroupLabel>编辑</GroupLabel>
        </Group>
        <Collapse><IconWrap $w={18}><Chevron /></IconWrap></Collapse>
      </Ribbon>

      <Qat>
        <QatLabel>自动保存</QatLabel>
        <Toggle><Dot />关</Toggle>
        <Slot $w={21} $ml={23}><Undo /></Slot>
        <Slot $w={10} $ml={10}><Caret $c="#fff" $s={4} /></Slot>
        <Slot $w={20} $ml={14}><Redo /></Slot>
        <Slot $w={24} $ml={21}><PresentIcon /></Slot>
        <Slot $w={18} $ml={19}><AlignQat /></Slot>
        <Slot $w={10} $ml={9}><Caret $c="#fff" $s={4} /></Slot>
        <Slot $w={22} $ml={10}><Circles /></Slot>
        <Slot $w={10} $ml={8}><Caret $c="#858585" $s={4} /></Slot>
        <Slot $w={15} $ml={16}><CursorIcon c="#666" s="#f0f0f0" /></Slot>
        <Slot $w={10} $ml={10}><Caret $c="#fff" $s={4} /></Slot>
        <Slot $w={19} $ml={16}><SaveIcon /></Slot>
        <Slot $w={10} $ml={29}><More /></Slot>
      </Qat>

      <Workspace>
        <LeftPanel>
          <ThumbRow>
            <ThumbNo $w={34} $pt={-8}>1</ThumbNo>
            <Thumb>
              <svg width="141" height="79" viewBox="320 289 793 446">
                <CurvePath />
                <path d="M659 557V601M863 400V450" stroke="#222" strokeWidth="6" />
                <path d="M648 590H670L659 606zM852 440H874L863 456z" fill="#222" />
                <rect x="640" y="610" width="36" height="14" fill="#bbb" />
                <rect x="850" y="458" width="30" height="10" fill="#bbb" />
                <rect x="808" y="474" width="112" height="10" fill="#bbb" />
              </svg>
            </Thumb>
          </ThumbRow>
          <ThumbRow $mt={28}>
            <ThumbNo $w={32} $pt={-7}>2</ThumbNo>
            <Thumb $sel>
              <svg width="141" height="80" viewBox="320 289 793 446">
                <CurvePath />
              </svg>
            </Thumb>
          </ThumbRow>
        </LeftPanel>

        <Center>
          <Editor>
            <HRuler><Rule /></HRuler>
            <SlideRow>
              <VRuler><Rule v /></VRuler>
              <Slide>
                <svg width="959" height="539" viewBox="320 289 793 446">
                  <CurvePath />
                </svg>
              </Slide>
            </SlideRow>
          </Editor>
          <VScroll>
            <ScrollBtn $h={24}><Caret $up $c="#333" $s={5} /></ScrollBtn>
            <Track />
            <Thumbbar />
            <ScrollBtn $h={24}><Caret $c="#333" $s={5} /></ScrollBtn>
            <Nav $mt={7}><DoubleArrow up /></Nav>
            <Nav $mt={13}><DoubleArrow up={false} /></Nav>
          </VScroll>
        </Center>

        <Pane>
          <PaneHead>
            设置背景格式
            <PaneCaret><Caret $c="#f0f0f0" $s={6.5} /></PaneCaret>
            <PaneClose><Close /></PaneClose>
          </PaneHead>
          <BucketTab><Bucket /></BucketTab>
          <TabLine><Notch /></TabLine>
          <SectionHead><TriOpen />填充</SectionHead>
          <Options>
            <Option><Radio $on /><OptionText>纯色填充(<Under>S</Under>)</OptionText></Option>
            <Option><Radio /><OptionText>渐变填充(<Under>G</Under>)</OptionText></Option>
            <Option><Radio /><OptionText>图片或纹理填充(<Under>P</Under>)</OptionText></Option>
            <Option><Radio /><OptionText>图案填充(<Under>A</Under>)</OptionText></Option>
            <Option><Check /><OptionText>隐藏背景图形(<Under>H</Under>)</OptionText></Option>
          </Options>
          <PaneRule />
          <FieldRow $mt={9} $h={34}>
            <FieldLabel>颜色(<Under>C</Under>)</FieldLabel>
            <ColorBtn><ColorBucket /><Caret $c="#444" $s={5} /></ColorBtn>
          </FieldRow>
          <FieldRow $mt={6} $h={32}>
            <FieldLabel $w={86}>透明度(<Under>T</Under>)</FieldLabel>
            <Slider><SliderKnob /><SliderLine /></Slider>
            <Spin><SpinValue>0%</SpinValue><SpinArrows><Caret $up $c="#333" $s={6.5} /><Caret $c="#333" $s={6.5} /></SpinArrows></Spin>
          </FieldRow>
          <PaneFooter>
            <PaneBtn>应用到全部(<Under>L</Under>)</PaneBtn>
            <PaneBtn $off>重置背景(B)</PaneBtn>
          </PaneFooter>
        </Pane>
      </Workspace>

      <Status>
        <StatusText $ml={60} $w={150}>幻灯片</StatusText>
        <StatusText $ml={0} $w={1228}>中文(中国)</StatusText>
        <StatusActive><StatusIcon /></StatusActive>
        <StatusIcon $ml={12} />
        <StatusIcon $ml={25} />
        <StatusIcon $ml={23} />
      </Status>
    </Root>
  );
}
